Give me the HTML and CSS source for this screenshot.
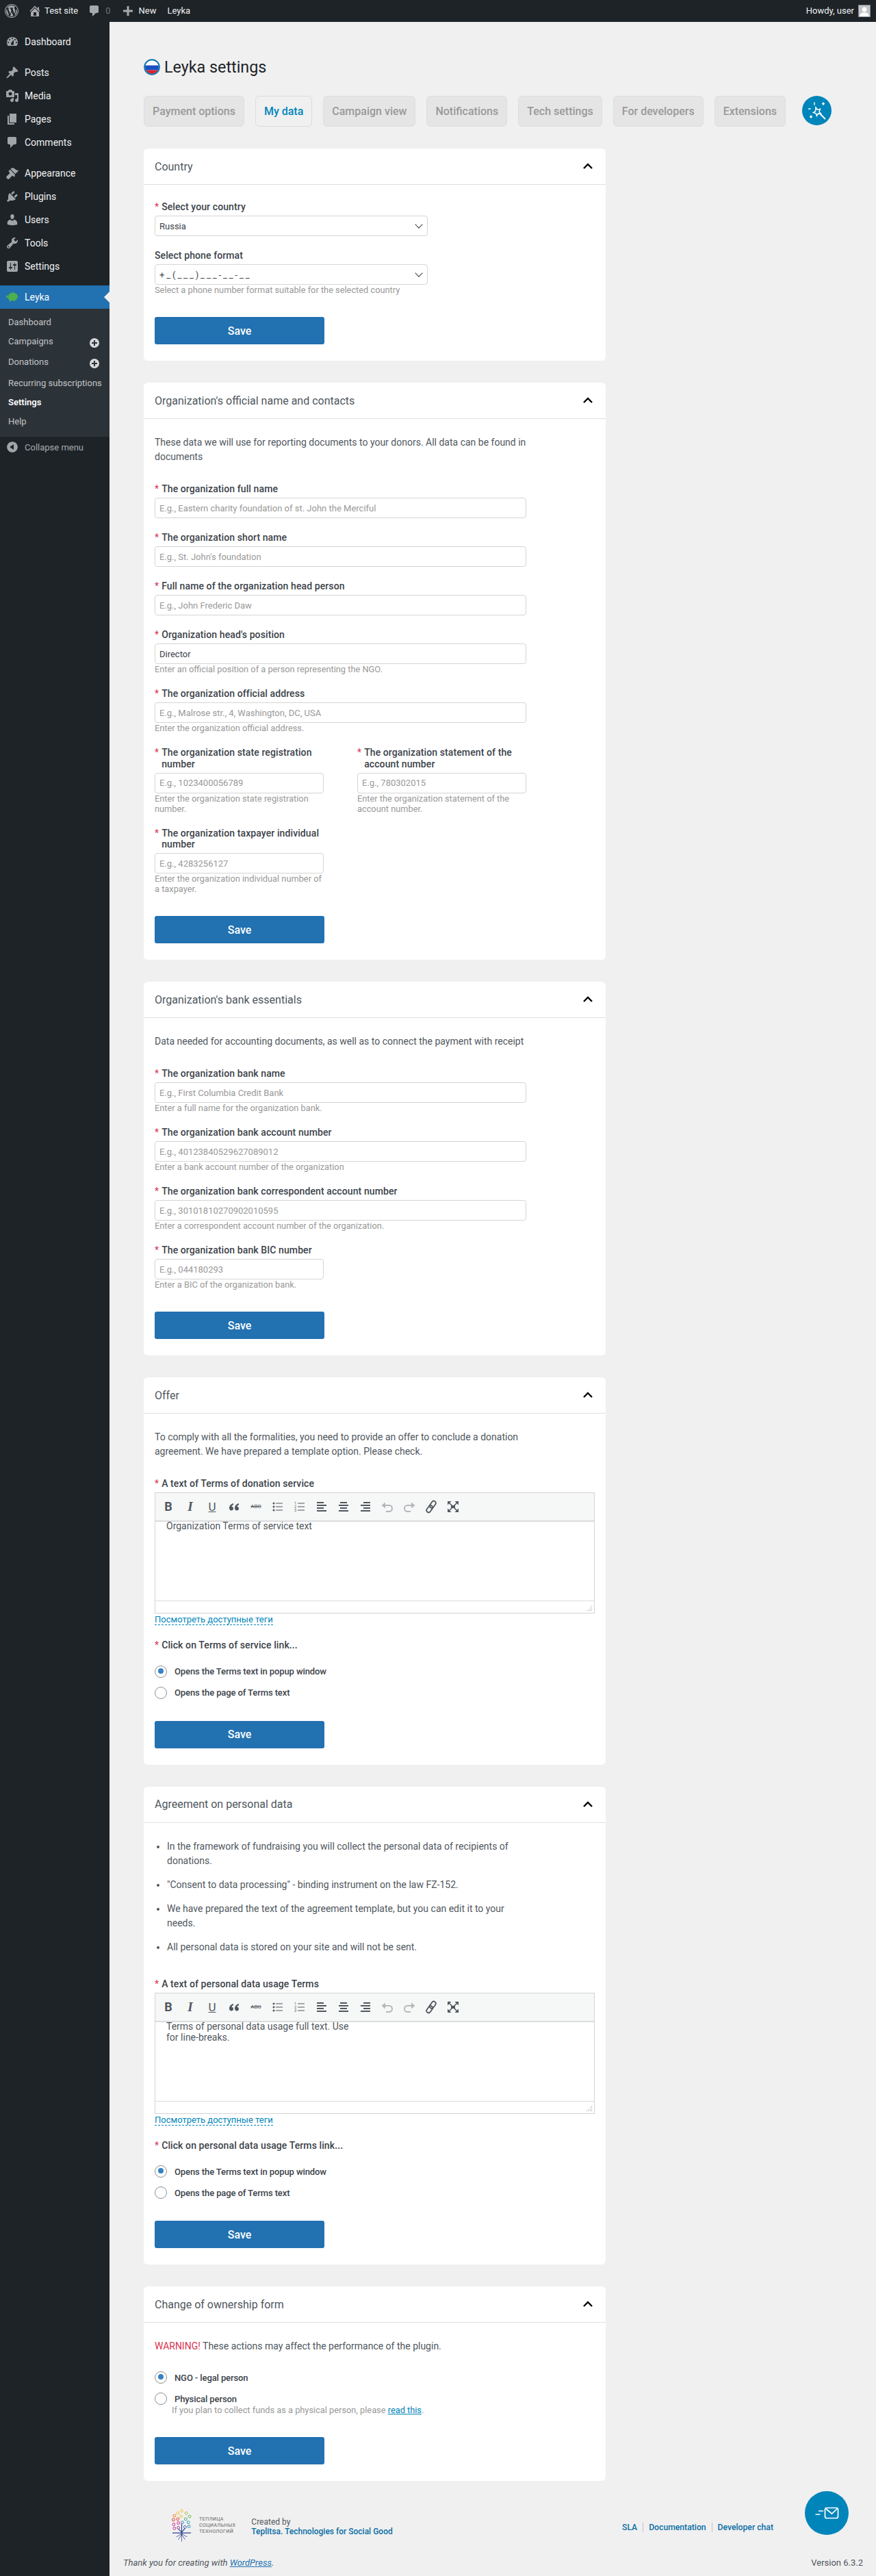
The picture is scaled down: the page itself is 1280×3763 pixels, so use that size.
FILE: index.html
```html
<!DOCTYPE html>
<html lang="en">

<head>
    <meta charset="UTF-8">
    <title>Leyka settings</title>
    <link rel="stylesheet" href="styles.css">
</head>

<body>
    <!-- shared icons -->
    <svg class="icon-defs" xmlns="http://www.w3.org/2000/svg">
        <symbol id="i-wp" viewBox="0 0 20 20"><path fill-rule="evenodd" d="M20 10c0-5.52-4.48-10-10-10S0 4.48 0 10s4.48 10 10 10 10-4.48 10-10zM10 1.01c4.97 0 8.99 4.02 8.99 8.99s-4.02 8.99-8.99 8.99S1.01 14.97 1.01 10 5.03 1.01 10 1.01zM8.01 14.82L4.96 6.61c.49-.03 1.05-.08 1.05-.08.43-.05.38-1.01-.06-.99 0 0-1.29.1-2.13.1-.15 0-.33 0-.52-.01 1.44-2.17 3.9-3.6 6.7-3.6 2.09 0 3.99.79 5.41 2.09-.6-.08-1.45.35-1.45 1.42 0 .66.38 1.22.79 1.88.31.54.5 1.22.5 2.21 0 1.34-1.27 4.48-1.27 4.48l-2.71-7.5c.48-.03.75-.16.75-.16.43-.05.38-1.1-.05-1.08 0 0-1.3.11-2.14.11-.78 0-2.11-.11-2.11-.11-.43-.02-.48 1.06-.05 1.08l.84.08 1.12 3.04zm6.02 2.15L16.64 10s.67-1.69.39-3.81c.63 1.14.94 2.42.94 3.81 0 2.96-1.56 5.58-3.94 7.01zM2.68 6.77L6.5 17.25c-2.67-1.3-4.47-4.08-4.47-7.25 0-1.16.2-2.23.65-3.23zm7.45 4.53l2.29 6.25c-.76.27-1.57.42-2.42.42-.72 0-1.41-.11-2.06-.3z"/></symbol>
        <symbol id="i-home" viewBox="0 0 20 20"><path fill-rule="evenodd" d="M16 8.5l1.53 1.53-1.06 1.06L10 4.62l-6.47 6.47-1.06-1.06L10 2.5l4 4v-2h2v4zm-6-2.46l6 5.99V18H4v-5.97zM12 17v-5H8v5h4z"/></symbol>
        <symbol id="i-comment" viewBox="0 0 20 20"><path d="M5 2h9c1.1 0 2 .9 2 2v7c0 1.1-.9 2-2 2h-2l-5 5v-5H5c-1.1 0-2-.9-2-2V4c0-1.1.9-2 2-2z"/></symbol>
        <symbol id="i-plus" viewBox="0 0 20 20"><path d="M8.500 3h3v5.500h5.500v3h-5.500v5.500h-3v-5.500h-5.500v-3h5.500z"/></symbol>
        <symbol id="i-dash" viewBox="0 0 20 20"><path fill-rule="evenodd" d="M3.76 16h12.48c1.1-1.37 1.76-3.11 1.76-5 0-4.420-3.580-8-8-8s-8 3.580-8 8c0 1.890.66 3.630 1.760 5zM10 4c.55 0 1 .45 1 1s-.45 1-1 1-1-.45-1-1 .45-1 1-1zM6 6c.55 0 1 .45 1 1s-.45 1-1 1-1-.45-1-1 .45-1 1-1zm8 0c.55 0 1 .45 1 1s-.45 1-1 1-1-.45-1-1 .45-1 1-1zm-5.370 5.550L12 7v6c0 1.100-.9 2-2 2s-2-.9-2-2c0-.57.24-1.080.63-1.450zM4 10c.55 0 1 .45 1 1s-.45 1-1 1-1-.45-1-1 .45-1 1-1zm12 0c.55 0 1 .45 1 1s-.45 1-1 1-1-.45-1-1 .45-1 1-1z"/></symbol>
        <symbol id="i-pin" viewBox="0 0 20 20"><path d="M10.440 3.020l1.820-1.820 6.360 6.350-1.830 1.820c-1.050-.68-2.480-.57-3.410.36l-.75.75c-.92.93-1.040 2.350-.35 3.410l-1.830 1.820-2.410-2.410-2.800 2.790c-.42.42-3.380 2.710-3.800 2.290s1.860-3.390 2.280-3.810l2.790-2.790L4.100 9.360l1.830-1.820c1.050.69 2.480.57 3.400-.36l.75-.75c.93-.92 1.050-2.350.36-3.410z"/></symbol>
        <symbol id="i-media" viewBox="0 0 20 20"><path fill-rule="evenodd" d="M13 11V4c0-.55-.45-1-1-1h-1.670L9 1H5L3.670 3H2c-.55 0-1 .45-1 1v7c0 .55.45 1 1 1h10c.55 0 1-.45 1-1zM7 4.500c1.380 0 2.500 1.120 2.500 2.500S8.380 9.500 7 9.500 4.500 8.380 4.500 7 5.620 4.500 7 4.500zM14 6h5v10.500c0 1.380-1.120 2.500-2.500 2.500S14 17.880 14 16.500s1.120-2.500 2.500-2.500c.17 0 .34.02.5.05V9h-3V6zm-4 8.050V13h2v3.500c0 1.380-1.120 2.500-2.500 2.500S7 17.880 7 16.500 8.120 14 9.500 14c.17 0 .34.02.5.05z"/></symbol>
        <symbol id="i-page" viewBox="0 0 20 20"><path d="M6 15V2h10v13H6zm-1 1h8v2H3V5h2v11z"/></symbol>
        <symbol id="i-brush" viewBox="0 0 20 20"><path d="M14.480 11.060L7.410 3.990l1.500-1.500c.5-.56 2.300-.47 3.510.32 1.210.8 1.430 1.280 2.910 2.100 1.180.64 2.450 1.260 4.450.85zm-.71.71L6.700 4.700 4.930 6.470c-.39.39-.39 1.020 0 1.410l1.060 1.060c.39.39.39 1.030 0 1.420L1.800 14.600c-.7.700-.7 1.800 0 2.500l1.100 1.100c.7.700 1.800.7 2.500 0l4.200-4.200c.39-.39 1.030-.39 1.420 0l1.060 1.060c.39.39 1.020.39 1.410 0z"/></symbol>
        <symbol id="i-plugin" viewBox="0 0 20 20"><path d="M13.110 4.360L9.870 7.600 8 5.730l3.240-3.240c.35-.34 1.050-.2 1.560.32.52.51.66 1.210.31 1.550zm-8 1.770l.91-1.120 9.010 9.010-1.190.84c-.71.71-2.630 1.160-3.820 1.160H6.140L4.900 17.260c-.59.59-1.540.59-2.120 0-.59-.58-.59-1.530 0-2.120l1.240-1.240v-3.880c0-1.130.4-3.190 1.090-3.890zm7.260 3.970l3.240-3.240c.34-.35 1.040-.21 1.550.31.52.51.66 1.210.31 1.550l-3.240 3.250z"/></symbol>
        <symbol id="i-users" viewBox="0 0 20 20"><path d="M10 9.250c-2.270 0-2.730-3.440-2.730-3.440C7 4.020 7.820 2 9.970 2c2.160 0 2.980 2.020 2.710 3.810 0 0-.41 3.440-2.680 3.440zm0 2.570L12.720 10c2.390 0 4.520 2.330 4.520 4.530v2.490s-3.650 1.130-7.240 1.130c-3.650 0-7.240-1.130-7.240-1.130v-2.490c0-2.250 1.940-4.480 4.470-4.480z"/></symbol>
        <symbol id="i-tools" viewBox="0 0 20 20"><path fill-rule="evenodd" d="M16.680 9.770c-1.340 1.340-3.300 1.670-4.950.99l-5.410 6.520c-.99.99-2.590.99-3.580 0s-.99-2.590 0-3.570l6.520-5.420c-.68-1.650-.35-3.610.99-4.950 1.280-1.280 3.120-1.620 4.720-1.060l-2.890 2.890 2.820 2.820 2.860-2.870c.53 1.580.18 3.390-1.080 4.650zM3.810 16.210c.4.39 1.040.39 1.430 0 .4-.4.4-1.040 0-1.430-.39-.4-1.030-.4-1.430 0-.39.39-.39 1.030 0 1.430z"/></symbol>
        <symbol id="i-sliders" viewBox="0 0 20 20"><path fill-rule="evenodd" d="M18 16V4c0-1.100-.9-2-2-2H4c-1.100 0-2 .9-2 2v12c0 1.100.9 2 2 2h12c1.100 0 2-.9 2-2zM8 11h1c.55 0 1 .45 1 1s-.45 1-1 1H8v1.500c0 .28-.22.5-.5.5s-.5-.22-.5-.5V13H6c-.55 0-1-.45-1-1s.45-1 1-1h1V5.500c0-.28.22-.5.5-.5s.5.22.5.5V11zm5-2h-1c-.55 0-1-.45-1-1s.45-1 1-1h1V5.500c0-.28.22-.5.5-.5s.5.22.5.5V7h1c.55 0 1 .45 1 1s-.45 1-1 1h-1v5.500c0 .28-.22.5-.5.5s-.5-.22-.5-.5V9z"/></symbol>
        <symbol id="i-collapse" viewBox="0 0 20 20"><path fill-rule="evenodd" d="M10 2.160c4.330 0 7.840 3.510 7.840 7.840s-3.510 7.840-7.840 7.840S2.160 14.330 2.160 10 5.710 2.160 10 2.160zm2 11.720V6.120L6.180 9.970z"/></symbol>
        <symbol id="i-add" viewBox="0 0 14 14"><path fill-rule="evenodd" d="M7 0a7 7 0 1 0 0 14A7 7 0 0 0 7 0zM6 3h2v3h3v2H8v3H6V8H3V6h3z"/></symbol>
        <symbol id="i-up" viewBox="0 0 16 10"><path d="M2 8l6-6 6 6" fill="none" stroke="#000" stroke-width="2.400"/></symbol>
        <symbol id="i-quote" viewBox="0 0 20 20"><path d="M9 5C5.500 6 3 8.500 3 12c0 2 1.200 3.500 3 3.500s3-1.300 3-3-1.200-2.800-2.700-2.800c.3-1 1.200-1.900 2.700-2.500zM17 5c-3.500 1-6 3.500-6 7 0 2 1.200 3.500 3 3.500s3-1.300 3-3-1.200-2.800-2.700-2.800c.3-1 1.200-1.900 2.700-2.500z"/></symbol>
        <symbol id="i-ul" viewBox="0 0 20 20"><circle cx="4" cy="5" r="1.500"/><circle cx="4" cy="10" r="1.500"/><circle cx="4" cy="15" r="1.500"/><path d="M7 4.500h10v1H7zM7 9.500h10v1H7zM7 14.500h10v1H7z"/></symbol>
        <symbol id="i-ol" viewBox="0 0 20 20"><text x="2" y="6.500" class="ol-num">1</text><text x="2" y="11.500" class="ol-num">2</text><text x="2" y="16.500" class="ol-num">3</text><path d="M7 4.500h10v1H7zM7 9.500h10v1H7zM7 14.500h10v1H7z"/></symbol>
        <symbol id="i-left" viewBox="0 0 20 20"><path d="M3 3h10v2H3zM3 7h14v2H3zM3 11h10v2H3zM3 15h14v2H3z"/></symbol>
        <symbol id="i-center" viewBox="0 0 20 20"><path d="M5 3h10v2H5zM3 7h14v2H3zM5 11h10v2H5zM3 15h14v2H3z"/></symbol>
        <symbol id="i-right" viewBox="0 0 20 20"><path d="M7 3h10v2H7zM3 7h14v2H3zM7 11h10v2H7zM3 15h14v2H3z"/></symbol>
        <symbol id="i-undo" viewBox="0 0 20 20"><path d="M6 8h6.500a4 4 0 0 1 0 9H8" fill="none" stroke="currentColor" stroke-width="2"/><path d="M7 3.500v9L1.500 8z"/></symbol>
        <symbol id="i-redo" viewBox="0 0 20 20"><path d="M14 8H7.500a4 4 0 0 0 0 9H12" fill="none" stroke="currentColor" stroke-width="2"/><path d="M13 3.500v9L18.500 8z"/></symbol>
        <symbol id="i-link" viewBox="0 0 20 20"><g transform="rotate(-55 10 10)" fill="none" stroke="currentColor" stroke-width="1.800"><rect x="0.500" y="7" width="11" height="6" rx="3"/><rect x="8.500" y="7" width="11" height="6" rx="3"/></g></symbol>
        <symbol id="i-full" viewBox="0 0 20 20"><path d="M2 2h5.500L2 7.500zM18 2v5.500L12.500 2zM2 18v-5.500L7.500 18zM18 18h-5.500l5.500-5.500zM7 8h6v4H7z"/><path d="M4 4l12 12M16 4L4 16" stroke="currentColor" stroke-width="1.500"/></symbol>
    </svg>

    <header class="admin-bar">
        <div class="bar-group">
            <svg class="bar-icon bar-wp"><use href="#i-wp"/></svg>
            <svg class="bar-icon bar-home"><use href="#i-home"/></svg>
            <span class="bar-text bar-site">Test site</span>
            <svg class="bar-icon bar-comment"><use href="#i-comment"/></svg>
            <span class="bar-text bar-count">0</span>
            <svg class="bar-icon bar-plus"><use href="#i-plus"/></svg>
            <span class="bar-text bar-new">New</span>
            <span class="bar-text bar-leyka">Leyka</span>
        </div>
        <div class="bar-group">
            <span class="bar-text">Howdy, user</span>
            <div class="avatar">
                <svg viewBox="0 0 18 18"><circle cx="9" cy="6.500" r="3.800" fill="#fff"/><path d="M1.500 18c0-5 3-6.500 7.500-6.500s7.500 1.500 7.500 6.500z" fill="#fff"/></svg>
            </div>
        </div>
    </header>

    <div class="layout">
        <nav class="sidebar">
            <ul class="menu">
                <li><svg><use href="#i-dash"/></svg>Dashboard</li>
            </ul>
            <ul class="menu">
                <li><svg><use href="#i-pin"/></svg>Posts</li>
                <li><svg><use href="#i-media"/></svg>Media</li>
                <li><svg><use href="#i-page"/></svg>Pages</li>
                <li><svg><use href="#i-comment"/></svg>Comments</li>
            </ul>
            <ul class="menu">
                <li><svg><use href="#i-brush"/></svg>Appearance</li>
                <li><svg><use href="#i-plugin"/></svg>Plugins</li>
                <li><svg><use href="#i-users"/></svg>Users</li>
                <li><svg><use href="#i-tools"/></svg>Tools</li>
                <li><svg><use href="#i-sliders"/></svg>Settings</li>
            </ul>
            <ul class="menu menu-current">
                <li class="current">
                    <svg viewBox="0 0 20 20"><path d="M1 8.500l2-1.500 1 2-1 2.500-2-1zM5 6c1-1.500 3-2 5-2l1-2.500 1.500 2.500c3 .5 5.500 2 5.500 5s-2 5-4 5.500v1.500h-2V15H8v1.500H6V15c-1.500-1-2-2.500-2-4.500 0-1.700.3-3.300 1-4.500z" fill="#4caf50"/></svg>
                    Leyka
                </li>
            </ul>
            <ul class="submenu">
                <li>Dashboard</li>
                <li class="sub-add">Campaigns <svg><use href="#i-add"/></svg></li>
                <li class="sub-add">Donations <svg><use href="#i-add"/></svg></li>
                <li class="sub-tall">Recurring subscriptions</li>
                <li class="sub-current">Settings</li>
                <li>Help</li>
            </ul>
            <div class="collapse"><svg><use href="#i-collapse"/></svg>Collapse menu</div>
        </nav>

        <div class="content">
            <main class="page">
                <h1 class="page-title">
                    <svg viewBox="0 0 24 24">
                        <clipPath id="flag-clip"><circle cx="12" cy="12" r="10"/></clipPath>
                        <g clip-path="url(#flag-clip)">
                            <rect x="0" y="0" width="24" height="9.500" fill="#fff"/>
                            <rect x="0" y="9.500" width="24" height="7" fill="#1c4fc4"/>
                            <rect x="0" y="16.500" width="24" height="8" fill="#d8232f"/>
                        </g>
                        <circle cx="12" cy="12" r="10.800" fill="none" stroke="#0b74b0" stroke-width="2"/>
                    </svg>
                    Leyka settings
                </h1>

                <div class="tabs">
                    <a class="tab">Payment options</a>
                    <a class="tab active">My data</a>
                    <a class="tab">Campaign view</a>
                    <a class="tab">Notifications</a>
                    <a class="tab">Tech settings</a>
                    <a class="tab">For developers</a>
                    <a class="tab">Extensions</a>
                    <a class="wizard">
                        <svg viewBox="0 0 43 43" fill="none" stroke="#fff" stroke-width="1.500">
                            <path d="M20 17l2.200 3.200 4.300-1-1.600 4 2.600 3-4-.3-2 3.300-1.300-3.700-3.700-1 3.100-2.200z"/>
                            <path d="M25 25l9 9" stroke-width="1.800"/>
                            <path d="M18 9.500v4M9 19h3.500"/>
                            <path d="M29 11.500h4M31 9.500v4M11 30.500h4M13 28.500v4" stroke-width="1.700"/>
                        </svg>
                    </a>
                </div>

                <section class="card">
                    <div class="card-head">
                        <h2>Country</h2>
                        <svg><use href="#i-up"/></svg>
                    </div>
                    <div class="card-body">
                        <div class="field field-select">
                            <label><i>*</i><span>Select your country</span></label>
                            <div class="select-wrap">
                                <select><option>Russia</option></select>
                            </div>
                        </div>
                        <div class="field field-select">
                            <label><span>Select phone format</span></label>
                            <div class="select-wrap">
                                <select class="phone"><option>+_(___)___-__-__</option></select>
                            </div>
                            <p class="help">Select a phone number format suitable for the selected country</p>
                        </div>
                        <button class="save">Save</button>
                    </div>
                </section>

                <section class="card">
                    <div class="card-head">
                        <h2>Organization's official name and contacts</h2>
                        <svg><use href="#i-up"/></svg>
                    </div>
                    <div class="card-body">
                        <p class="intro">These data we will use for reporting documents to your donors. All data can be found in documents</p>
                        <div class="field">
                            <label><i>*</i><span>The organization full name</span></label>
                            <input type="text" placeholder="E.g., Eastern charity foundation of st. John the Merciful">
                        </div>
                        <div class="field">
                            <label><i>*</i><span>The organization short name</span></label>
                            <input type="text" placeholder="E.g., St. John's foundation">
                        </div>
                        <div class="field">
                            <label><i>*</i><span>Full name of the organization head person</span></label>
                            <input type="text" placeholder="E.g., John Frederic Daw">
                        </div>
                        <div class="field">
                            <label><i>*</i><span>Organization head's position</span></label>
                            <input type="text" value="Director">
                            <p class="help">Enter an official position of a person representing the NGO.</p>
                        </div>
                        <div class="field">
                            <label><i>*</i><span>The organization official address</span></label>
                            <input type="text" placeholder="E.g., Malrose str., 4, Washington, DC, USA">
                            <p class="help">Enter the organization official address.</p>
                        </div>
                        <div class="two-col">
                            <div class="field">
                                <label><i>*</i><span>The organization state registration number</span></label>
                                <input type="text" placeholder="E.g., 1023400056789">
                                <p class="help">Enter the organization state registration number.</p>
                            </div>
                            <div class="field">
                                <label><i>*</i><span>The organization statement of the account number</span></label>
                                <input type="text" placeholder="E.g., 780302015">
                                <p class="help">Enter the organization statement of the account number.</p>
                            </div>
                            <div class="field">
                                <label><i>*</i><span>The organization taxpayer individual number</span></label>
                                <input type="text" placeholder="E.g., 4283256127">
                                <p class="help">Enter the organization individual number of a taxpayer.</p>
                            </div>
                        </div>
                        <button class="save">Save</button>
                    </div>
                </section>

                <section class="card">
                    <div class="card-head">
                        <h2>Organization's bank essentials</h2>
                        <svg><use href="#i-up"/></svg>
                    </div>
                    <div class="card-body">
                        <p class="intro">Data needed for accounting documents, as well as to connect the payment with receipt</p>
                        <div class="field">
                            <label><i>*</i><span>The organization bank name</span></label>
                            <input type="text" placeholder="E.g., First Columbia Credit Bank">
                            <p class="help">Enter a full name for the organization bank.</p>
                        </div>
                        <div class="field">
                            <label><i>*</i><span>The organization bank account number</span></label>
                            <input type="text" placeholder="E.g., 40123840529627089012">
                            <p class="help">Enter a bank account number of the organization</p>
                        </div>
                        <div class="field">
                            <label><i>*</i><span>The organization bank correspondent account number</span></label>
                            <input type="text" placeholder="E.g., 30101810270902010595">
                            <p class="help">Enter a correspondent account number of the organization.</p>
                        </div>
                        <div class="field field-half">
                            <label><i>*</i><span>The organization bank BIC number</span></label>
                            <input type="text" placeholder="E.g., 044180293">
                            <p class="help">Enter a BIC of the organization bank.</p>
                        </div>
                        <button class="save">Save</button>
                    </div>
                </section>

                <section class="card">
                    <div class="card-head">
                        <h2>Offer</h2>
                        <svg><use href="#i-up"/></svg>
                    </div>
                    <div class="card-body">
                        <p class="intro">To comply with all the formalities, you need to provide an offer to conclude a donation agreement. We have prepared a template option. Please check.</p>
                        <label class="plain-label"><i>*</i><span>A text of Terms of donation service</span></label>
                        <div class="editor">
                            <div class="toolbar">
                                <span class="tb tb-b">B</span>
                                <span class="tb tb-i">I</span>
                                <span class="tb tb-u">U</span>
                                <span class="tb"><svg><use href="#i-quote"/></svg></span>
                                <span class="tb tb-s">ABC</span>
                                <span class="tb"><svg><use href="#i-ul"/></svg></span>
                                <span class="tb"><svg><use href="#i-ol"/></svg></span>
                                <span class="tb"><svg><use href="#i-left"/></svg></span>
                                <span class="tb"><svg><use href="#i-center"/></svg></span>
                                <span class="tb"><svg><use href="#i-right"/></svg></span>
                                <span class="tb tb-off"><svg><use href="#i-undo"/></svg></span>
                                <span class="tb tb-off"><svg><use href="#i-redo"/></svg></span>
                                <span class="tb"><svg><use href="#i-link"/></svg></span>
                                <span class="tb"><svg><use href="#i-full"/></svg></span>
                            </div>
                            <div class="editor-text">Organization Terms of service text</div>
                            <div class="editor-status"><span class="grip"></span></div>
                        </div>
                        <a class="tags-link">Посмотреть доступные теги</a>
                        <label class="plain-label radio-title"><i>*</i><span>Click on Terms of service link...</span></label>
                        <label class="radio"><input type="radio" name="offer" checked><span>Opens the Terms text in popup window</span></label>
                        <label class="radio"><input type="radio" name="offer"><span>Opens the page of Terms text</span></label>
                        <button class="save">Save</button>
                    </div>
                </section>

                <section class="card">
                    <div class="card-head">
                        <h2>Agreement on personal data</h2>
                        <svg><use href="#i-up"/></svg>
                    </div>
                    <div class="card-body">
                        <ul class="notes">
                            <li>In the framework of fundraising you will collect the personal data of recipients of donations.</li>
                            <li>"Consent to data processing" - binding instrument on the law FZ-152.</li>
                            <li>We have prepared the text of the agreement template, but you can edit it to your needs.</li>
                            <li>All personal data is stored on your site and will not be sent.</li>
                        </ul>
                        <label class="plain-label"><i>*</i><span>A text of personal data usage Terms</span></label>
                        <div class="editor">
                            <div class="toolbar">
                                <span class="tb tb-b">B</span>
                                <span class="tb tb-i">I</span>
                                <span class="tb tb-u">U</span>
                                <span class="tb"><svg><use href="#i-quote"/></svg></span>
                                <span class="tb tb-s">ABC</span>
                                <span class="tb"><svg><use href="#i-ul"/></svg></span>
                                <span class="tb"><svg><use href="#i-ol"/></svg></span>
                                <span class="tb"><svg><use href="#i-left"/></svg></span>
                                <span class="tb"><svg><use href="#i-center"/></svg></span>
                                <span class="tb"><svg><use href="#i-right"/></svg></span>
                                <span class="tb tb-off"><svg><use href="#i-undo"/></svg></span>
                                <span class="tb tb-off"><svg><use href="#i-redo"/></svg></span>
                                <span class="tb"><svg><use href="#i-link"/></svg></span>
                                <span class="tb"><svg><use href="#i-full"/></svg></span>
                            </div>
                            <div class="editor-text">Terms of personal data usage full text. Use<br>for line-breaks.</div>
                            <div class="editor-status"><span class="grip"></span></div>
                        </div>
                        <a class="tags-link">Посмотреть доступные теги</a>
                        <label class="plain-label radio-title"><i>*</i><span>Click on personal data usage Terms link...</span></label>
                        <label class="radio"><input type="radio" name="terms" checked><span>Opens the Terms text in popup window</span></label>
                        <label class="radio"><input type="radio" name="terms"><span>Opens the page of Terms text</span></label>
                        <button class="save">Save</button>
                    </div>
                </section>

                <section class="card">
                    <div class="card-head">
                        <h2>Change of ownership form</h2>
                        <svg><use href="#i-up"/></svg>
                    </div>
                    <div class="card-body">
                        <p class="intro intro-warning"><b>WARNING!</b> These actions may affect the performance of the plugin.</p>
                        <label class="radio"><input type="radio" name="owner" checked><span>NGO - legal person</span></label>
                        <label class="radio radio-last"><input type="radio" name="owner"><span>Physical person</span></label>
                        <p class="help help-radio">If you plan to collect funds as a physical person, please <a>read this</a>.</p>
                        <button class="save">Save</button>
                    </div>
                </section>

                <div class="plugin-footer">
                    <div class="credits">
                        <div class="teplitsa-logo">
                            <svg viewBox="0 0 30 50" fill="none" stroke-width="1">
                                <circle cx="15" cy="2.500" r="2" stroke="#f2c12e"/>
                                <circle cx="9" cy="6" r="2" stroke="#f2c12e"/>
                                <circle cx="22" cy="6" r="2" stroke="#9cc53d"/>
                                <circle cx="4" cy="10" r="2" stroke="#ef7d22"/>
                                <circle cx="14" cy="11" r="2" stroke="#f2c12e"/>
                                <circle cx="27" cy="11" r="2" stroke="#6dbb45"/>
                                <circle cx="2.500" cy="16" r="2" stroke="#e2322b"/>
                                <circle cx="9" cy="15" r="2" stroke="#e2322b"/>
                                <circle cx="21" cy="15" r="2" stroke="#3fae6a"/>
                                <circle cx="3" cy="23" r="2" stroke="#d3217f"/>
                                <circle cx="10" cy="21" r="2" stroke="#d3217f"/>
                                <circle cx="16" cy="20" r="2" stroke="#3c7fc4"/>
                                <circle cx="25" cy="20" r="2" stroke="#22a3a8"/>
                                <circle cx="10" cy="28" r="2" stroke="#9a2f9c"/>
                                <circle cx="20" cy="27" r="2" stroke="#2f5fb3"/>
                                <circle cx="4" cy="29" r="2" stroke="#c02496"/>
                                <circle cx="26" cy="26" r="2" stroke="#1f8fb5"/>
                                <path d="M15 22v18M10 30l5 5 5-6M1 36h28" stroke="#2e3f8f" stroke-width="1.200"/>
                                <path d="M15 37l-8 5M15 37l8 5M15 38l-5 8M15 38l5 8M15 38v11" stroke="#2e3f8f" stroke-width=".8"/>
                            </svg>
                            <div class="logo-words">ТЕПЛИЦА<br>СОЦИАЛЬНЫХ<br>ТЕХНОЛОГИЙ</div>
                        </div>
                        <div class="created">Created by<br><a>Teplitsa. Technologies for Social Good</a></div>
                    </div>
                    <div class="foot-links">
                        <a>SLA</a>
                        <a>Documentation</a>
                        <a>Developer chat</a>
                    </div>
                    <a class="chat">
                        <svg viewBox="0 0 64 64" fill="none" stroke="#fff">
                            <rect x="29.500" y="24.500" width="19" height="15" rx="2.500" stroke-width="1.700"/>
                            <path d="M31 26l8.500 7 8-7.500" stroke-width="1.700"/>
                            <path d="M15.500 34h7M20 29h7" stroke-width="1.500"/>
                        </svg>
                    </a>
                </div>
            </main>

            <footer class="wp-footer">
                <em>Thank you for creating with <a>WordPress</a>.</em>
                <span>Version 6.3.2</span>
            </footer>
        </div>
    </div>
</body>

</html>
```
FILE: styles.css
```css
* {
    box-sizing: border-box;
}

body {
    margin: 0;
    font-family: Roboto, "Noto Sans", sans-serif;
    font-size: 14px;
    color: #50575e;
    background-color: #f0f0f0;
}

ul {
    list-style: none;
    margin: 0;
    padding: 0;
}

p {
    margin: 0;
}

.icon-defs {
    display: none;
}

.ol-num {
    font-size: 5.500px;
    font-family: Roboto, sans-serif;
}

/* admin bar */
.admin-bar {
    height: 32px;
    background-color: #1d2327;
    color: #f0f0f1;
    display: flex;
    justify-content: space-between;
    align-items: center;
    padding: 0 8px 0 7px;
}

.bar-group {
    display: flex;
    align-items: center;
}

.bar-icon {
    width: 20px;
    height: 20px;
    fill: #a7aaad;
    flex-shrink: 0;
}

.bar-home {
    margin-left: 14px;
}

.bar-text {
    font-size: 13px;
    line-height: 32px;
}

.bar-site {
    margin-left: 4px;
}

.bar-comment {
    margin-left: 14px;
}

.bar-count {
    margin-left: 6px;
    color: #70757a;
}

.bar-plus {
    margin-left: 15px;
}

.bar-new {
    margin-left: 6px;
}

.bar-leyka {
    margin-left: 16px;
}

.avatar {
    width: 18px;
    height: 18px;
    margin-left: 6px;
    background-color: #c3c4c7;
    border: 1px solid #8c8f94;
    overflow: hidden;
}

.avatar svg {
    display: block;
    width: 100%;
    height: 100%;
}

/* side menu */
.layout {
    display: flex;
}

.sidebar {
    width: 160px;
    flex-shrink: 0;
    background-color: #1d2327;
    padding-top: 12px;
    color: #f0f0f1;
}

.menu {
    margin-bottom: 11px;
}

.menu li {
    height: 34px;
    display: flex;
    align-items: center;
    gap: 8px;
    padding-left: 8px;
}

.menu svg,
.collapse svg {
    width: 20px;
    height: 20px;
    fill: #a0a5aa;
    flex-shrink: 0;
}

.menu-current {
    margin-bottom: 0;
}

.menu .current {
    position: relative;
    background-color: #2271b1;
    color: #fff;
}

.current::after {
    content: "";
    position: absolute;
    right: 0;
    top: 9px;
    border: 8px solid transparent;
    border-right-color: #f0f0f0;
    border-left-width: 0;
}

.submenu {
    background-color: #2c3338;
    padding: 6px 0 8px;
    font-size: 13px;
    color: #c3c4c7;
}

.submenu li {
    height: 28px;
    line-height: 28px;
    padding-left: 12px;
}

.submenu .sub-add {
    height: 30px;
    line-height: 28px;
    display: flex;
    justify-content: space-between;
    padding-right: 15px;
}

.sub-add svg {
    width: 14px;
    height: 14px;
    margin-top: 9px;
    fill: #d5d7d9;
}

.submenu .sub-tall {
    height: 29px;
    line-height: 30px;
    white-space: nowrap;
}

.submenu .sub-current {
    color: #fff;
    font-weight: 600;
}

.collapse {
    height: 30px;
    display: flex;
    align-items: center;
    gap: 8px;
    padding-left: 8px;
    font-size: 13px;
    color: #a7aaad;
}

/* page */
.content {
    flex: 1;
    min-width: 0;
}

.page {
    padding: 51px 0 0 50px;
}

.page-title {
    display: flex;
    align-items: center;
    gap: 6px;
    margin: 0 0 27px;
    height: 30px;
    font-size: 23.300px;
    line-height: 30px;
    font-weight: 400;
    color: #1d2327;
}

.page-title svg {
    width: 24px;
    height: 24px;
}

.tabs {
    display: flex;
    gap: 16px;
    margin-bottom: 32px;
}

.tab {
    height: 45px;
    padding: 0 12px;
    line-height: 43px;
    font-size: 16px;
    font-weight: 500;
    color: #999;
    background-color: #e5e5e5;
    border: 1px solid #dedede;
    border-radius: 6px;
}

.tab.active {
    color: #0085ba;
    background-color: #f0f0f0;
    border-color: #dcdcde;
}

.wizard {
    width: 43px;
    height: 43px;
    margin-left: 8px;
    border-radius: 50%;
    background-color: #0085ba;
}

.wizard svg {
    display: block;
}

/* cards */
.card {
    width: 675px;
    background-color: #fff;
    border-radius: 6px;
    margin-bottom: 32px;
}

.card-head {
    height: 53px;
    display: flex;
    justify-content: space-between;
    align-items: center;
    padding: 0 16px;
    border-bottom: 1px solid #e0e0e0;
}

.card-head h2 {
    margin: 0;
    font-size: 16px;
    font-weight: 400;
    color: #50575e;
}

.card-head svg {
    width: 16px;
    height: 10px;
    margin-right: 2px;
}

.card-body {
    padding: 24px 16px;
}

.intro {
    line-height: 21px;
    margin-bottom: 28px;
    width: 543px;
}

.intro-warning {
    margin-bottom: 26px;
}

.intro-warning b {
    font-weight: 400;
    color: #d63651;
}

.notes {
    width: 543px;
    margin-bottom: 35px;
}

.notes li {
    position: relative;
    padding-left: 18px;
    line-height: 21px;
    margin-bottom: 14px;
}

.notes li::before {
    content: "";
    position: absolute;
    left: 3px;
    top: 9px;
    width: 4px;
    height: 4px;
    border-radius: 50%;
    background-color: #50575e;
}

.notes li:last-child {
    margin-bottom: 0;
}

/* form fields */
.field {
    width: 543px;
    margin-bottom: 20px;
}

.field-select {
    width: 399px;
}

.field-half {
    width: 247px;
}

.two-col {
    display: grid;
    grid-template-columns: 247px 247px;
    column-gap: 49px;
}

.two-col .field {
    width: auto;
}

.field label,
.plain-label {
    display: flex;
    gap: 4px;
    font-size: 14px;
    line-height: 16.500px;
    font-weight: 500;
    letter-spacing: 0.1px;
    color: #3c434a;
    margin-bottom: 4.500px;
}

label i {
    font-style: normal;
    font-weight: 400;
    color: #d63651;
}

input[type="text"],
select {
    display: block;
    width: 100%;
    height: 30px;
    padding: 0 6px;
    font-family: inherit;
    font-size: 13px;
    color: #3c434a;
    background-color: #fff;
    border: 1px solid #d5d5d5;
    border-radius: 4px;
    appearance: none;
}

input::placeholder {
    color: #999;
    opacity: 1;
}

.select-wrap {
    position: relative;
}

.select-wrap::after {
    content: "";
    position: absolute;
    right: 9px;
    top: 9px;
    width: 7px;
    height: 7px;
    border-right: 1.500px solid #3c434a;
    border-bottom: 1.500px solid #3c434a;
    transform: rotate(45deg);
}

.phone {
    letter-spacing: 2.900px;
}

.help {
    font-size: 12.800px;
    line-height: 15px;
    color: #999;
}

.help-radio {
    margin-left: 25px;
}

.help a {
    color: #0085ba;
    text-decoration: underline;
}

.save {
    display: block;
    width: 248px;
    height: 40px;
    margin-top: 32px;
    border: 0;
    border-radius: 3px;
    background-color: #2271b1;
    color: #fff;
    font-family: inherit;
    font-size: 16px;
    font-weight: 500;
}

.two-col + .save {
    margin-top: 12px;
}

/* editor */
.editor {
    border: 1px solid #d5d5d5;
    height: 177px;
    display: flex;
    flex-direction: column;
}

.toolbar {
    height: 42px;
    flex-shrink: 0;
    display: flex;
    align-items: center;
    padding-left: 3px;
    background-color: #f6f7f7;
    border-bottom: 2px solid #dcdcde;
    color: #50575e;
}

.tb {
    width: 32px;
    flex-shrink: 0;
    text-align: center;
    line-height: 20px;
}

.tb svg {
    display: block;
    width: 20px;
    height: 20px;
    margin: 0 auto;
    fill: currentColor;
}

.tb-b {
    font-size: 18px;
    font-weight: 700;
}

.tb-i {
    font-family: "Liberation Serif", serif;
    font-size: 19px;
    font-style: italic;
    font-weight: 700;
}

.tb-u {
    font-size: 17px;
    text-decoration: underline;
}

.tb-s {
    font-size: 8px;
    text-decoration: line-through;
}

.tb-off {
    color: #b5b8bb;
}

.editor-text {
    height: 117px;
    margin-top: -2px;
    padding: 0 16px;
    line-height: 16px;
    color: #50575e;
}

.editor-status {
    flex: 1;
    position: relative;
    border-top: 1px solid #dcdcde;
}

.grip {
    position: absolute;
    right: 2px;
    bottom: 2px;
    width: 10px;
    height: 10px;
    background-image: radial-gradient(#50575e 0.7px, transparent 0.8px);
    background-size: 2.500px 2.500px;
    clip-path: polygon(100% 0, 100% 100%, 0 100%);
}

.tags-link {
    display: table;
    margin-top: 1px;
    font-size: 13px;
    line-height: 15px;
    color: #0085ba;
    border-bottom: 1px dashed #0085ba;
}

.plain-label.radio-title {
    margin: 21px 0 21px;
}

/* radios */
.radio {
    display: flex;
    align-items: center;
    gap: 11px;
    height: 18px;
    margin-bottom: 13px;
    font-size: 13px;
    font-weight: 500;
    letter-spacing: -0.1px;
    color: #3c434a;
}

.radio input {
    appearance: none;
    width: 18px;
    height: 18px;
    margin: 0;
    flex-shrink: 0;
    background-color: #fff;
    border: 1px solid #8c8f94;
    border-radius: 50%;
    display: flex;
    align-items: center;
    justify-content: center;
}

.radio input:checked::before {
    content: "";
    width: 8px;
    height: 8px;
    margin-bottom: 2px;
    border-radius: 50%;
    background-color: #3582c4;
}

.radio-last {
    margin-bottom: 0;
}

/* footers */
.plugin-footer {
    position: relative;
    display: flex;
    align-items: center;
    justify-content: space-between;
    width: 920px;
    height: 49px;
    margin-top: 41px;
    padding-left: 41px;
}

.credits {
    display: flex;
    align-items: center;
    gap: 23px;
}

.teplitsa-logo {
    display: flex;
    align-items: center;
    gap: 11px;
}

.teplitsa-logo svg {
    width: 29px;
    height: 49px;
}

.logo-words {
    font-size: 7.200px;
    line-height: 8.700px;
    letter-spacing: 0.3px;
    color: #666;
}

.created {
    font-size: 12px;
    line-height: 14px;
    color: #50575e;
    margin-top: 3px;
}

.created a {
    font-weight: 500;
    color: #0a6ea5;
}

.foot-links {
    display: flex;
    margin-top: 4px;
    font-size: 12.200px;
    font-weight: 500;
    color: #0a6ea5;
}

.foot-links a + a {
    margin-left: 8px;
    padding-left: 8px;
    border-left: 1px solid #c3c4c7;
}

.chat {
    position: absolute;
    left: 966px;
    top: -26px;
    width: 64px;
    height: 64px;
    border-radius: 50%;
    background-color: #0085ba;
}

.chat svg {
    display: block;
}

.wp-footer {
    display: flex;
    justify-content: space-between;
    margin-top: 21px;
    padding: 0 19px 11px 20px;
    font-size: 13px;
    line-height: 18px;
}

.wp-footer a {
    color: #2271b1;
    text-decoration: underline;
}
```
